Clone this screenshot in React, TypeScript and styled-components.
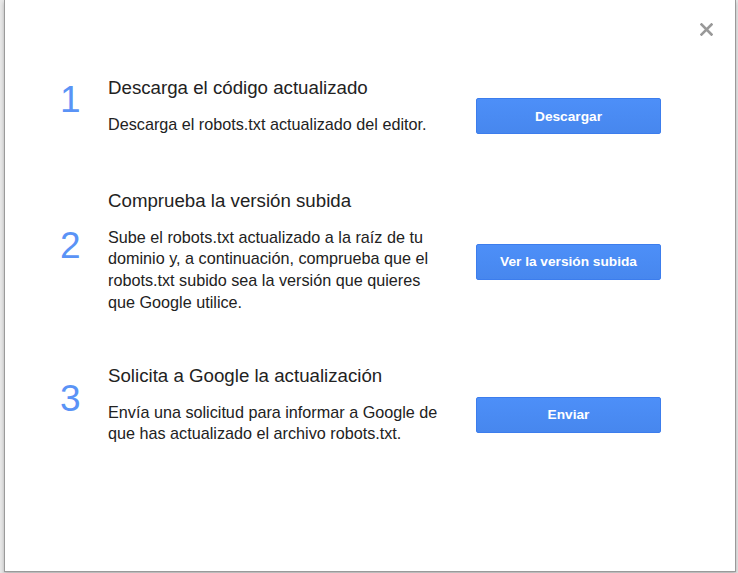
import React from "react";
import styled, { createGlobalStyle } from "styled-components";

const Global = createGlobalStyle`
  html, body { margin: 0; padding: 0; }
  body {
    background: #e9e9e9;
    font-family: Arial, "Liberation Sans", sans-serif;
    overflow: hidden;
  }
`;

const Page = styled.div`
  height: 573px;
  padding-left: 4px;
  box-sizing: border-box;
`;

const Dialog = styled.div`
  position: relative;
  width: 732px;
  height: 572px;
  box-sizing: border-box;
  background: #fff;
  border: 1px solid #9a9a9a;
  border-top: none;
  box-shadow: 0 2px 4px rgba(0, 0, 0, 0.25);
  padding: 76px 0 0 57px;
  display: flex;
  flex-direction: column;
  gap: 50px;
`;

const Close = styled.button`
  position: absolute;
  top: 21px;
  right: 21px;
  width: 16px;
  height: 16px;
  padding: 0;
  border: none;
  background: none;
  display: flex;
  align-items: center;
  justify-content: center;
  cursor: pointer;
`;

const Step = styled.div`
  display: grid;
  grid-template-columns: 46px 340px 213px;
  grid-template-rows: auto auto;
  &:first-of-type {
    margin-bottom: 3px;
  }
`;

const Num = styled.div`
  grid-row: 1 / span 2;
  grid-column: 1;
  align-self: center;
  font-size: 37px;
  line-height: 40px;
  margin: 0 0 11px -2px;
  color: #5a93f6;
`;

const Title = styled.div`
  grid-row: 1;
  grid-column: 2;
  font-size: 18.7px;
  line-height: 24px;
  color: #222;
  margin-bottom: 14px;
`;

const Body = styled.div`
  grid-row: 2;
  grid-column: 2;
  font-size: 16.2px;
  line-height: 21.7px;
  color: #222;
`;

const Action = styled.div`
  grid-row: 1 / span 2;
  grid-column: 3;
  align-self: center;
  padding-left: 28px;
  margin-top: 21px;
`;

const Button = styled.button`
  width: 185px;
  height: 36px;
  box-sizing: border-box;
  border: 1px solid #3c7ded;
  border-radius: 2px;
  background: linear-gradient(#4d8ff8, #4787ee);
  color: #fff;
  font-family: Arial, "Liberation Sans", sans-serif;
  font-weight: bold;
  font-size: 13.7px;
  cursor: pointer;
`;

const steps = [
  {
    n: "1",
    title: "Descarga el código actualizado",
    body: "Descarga el robots.txt actualizado del editor.",
    button: "Descargar",
  },
  {
    n: "2",
    title: "Comprueba la versión subida",
    body: "Sube el robots.txt actualizado a la raíz de tu dominio y, a continuación, comprueba que el robots.txt subido sea la versión que quieres que Google utilice.",
    button: "Ver la versión subida",
  },
  {
    n: "3",
    title: "Solicita a Google la actualización",
    body: "Envía una solicitud para informar a Google de que has actualizado el archivo robots.txt.",
    button: "Enviar",
  },
];

export default function App() {
  return (
    <Page>
      <Global />
      <Dialog>
        <Close aria-label="Cerrar">
          <svg width="13" height="13" viewBox="0 0 13 13">
            <path d="M1.5 1.5 L11.5 11.5 M11.5 1.5 L1.5 11.5" stroke="#999" strokeWidth="2.6" strokeLinecap="square" />
          </svg>
        </Close>
        {steps.map((s) => (
          <Step key={s.n}>
            <Num>{s.n}</Num>
            <Title>{s.title}</Title>
            <Body>{s.body}</Body>
            <Action>
              <Button>{s.button}</Button>
            </Action>
          </Step>
        ))}
      </Dialog>
    </Page>
  );
}
